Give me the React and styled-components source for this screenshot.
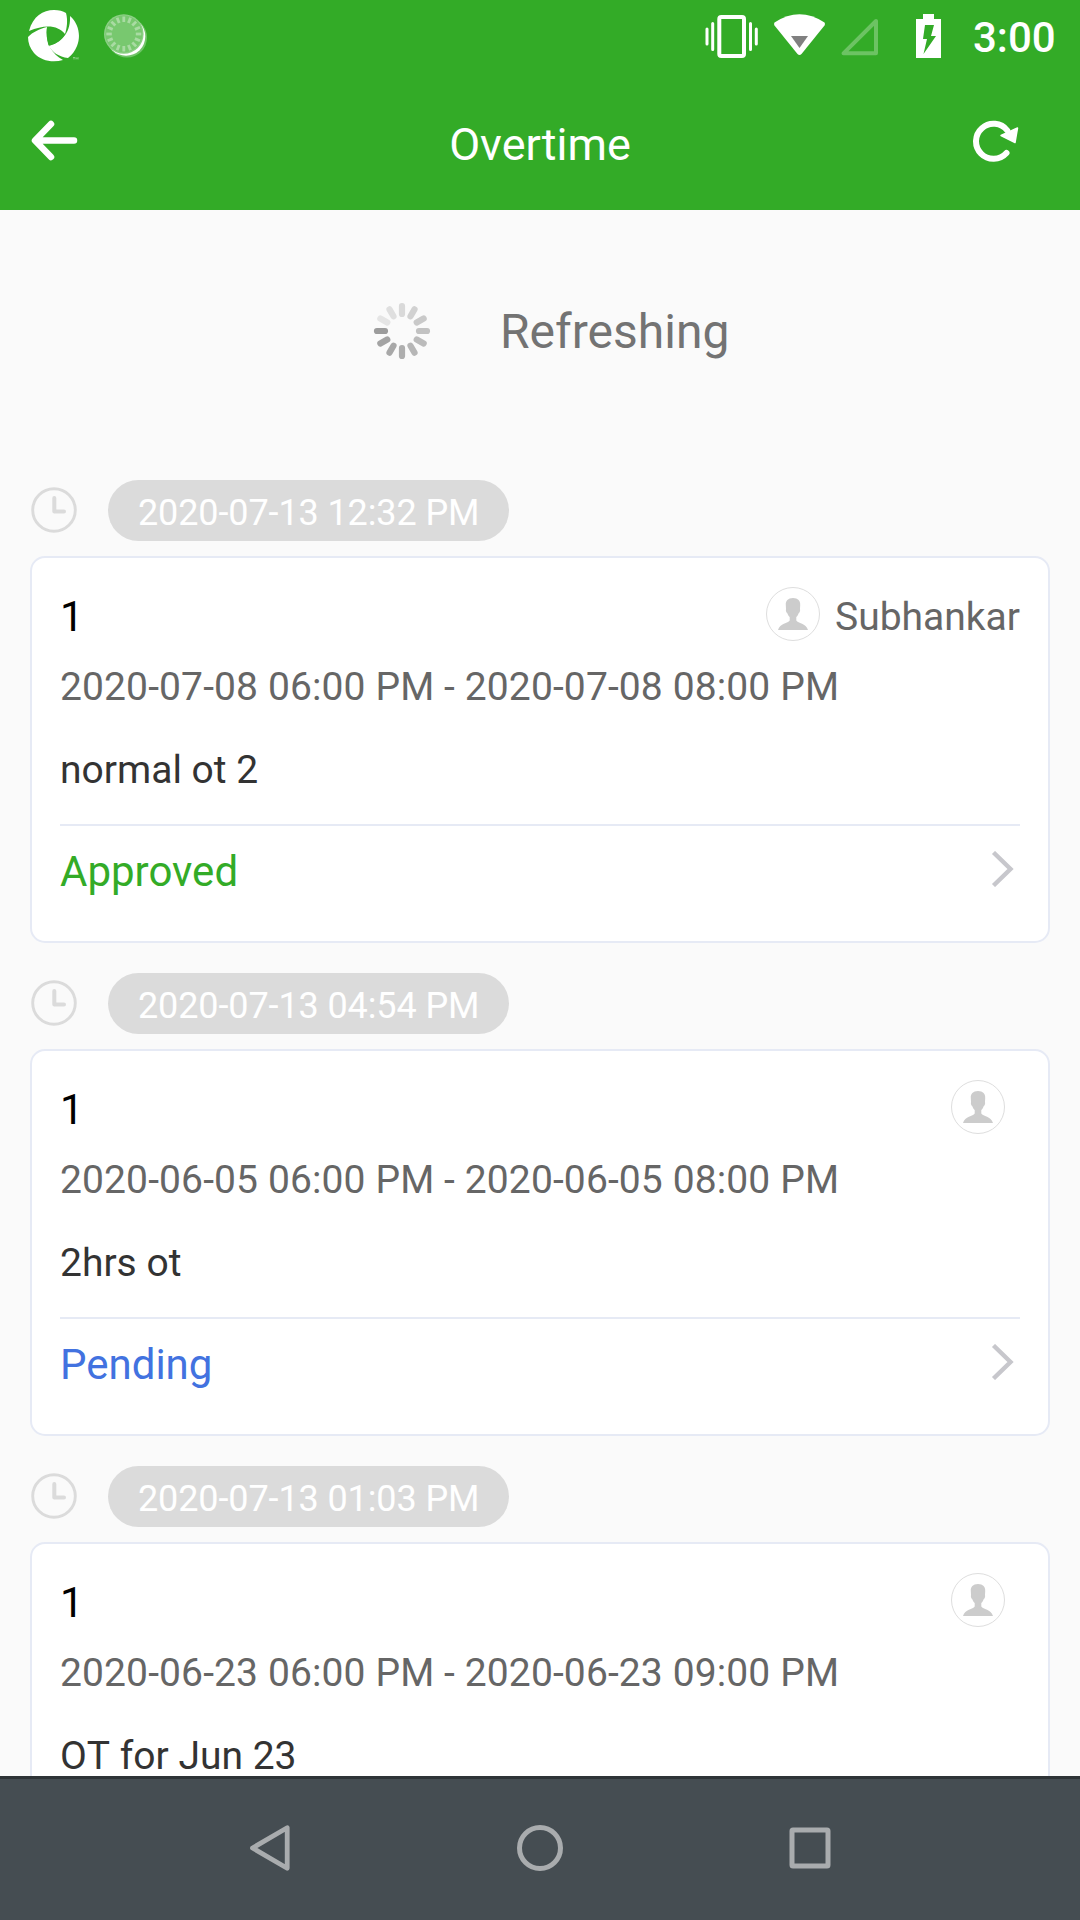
import React from "react";
import styled, { createGlobalStyle } from "styled-components";

const GlobalStyle = createGlobalStyle`
  *, *::before, *::after { box-sizing: border-box; }
  html, body { margin: 0; padding: 0; background: #fafafa; }
  body { font-family: Roboto, "Noto Sans", "Liberation Sans", sans-serif; }
  svg { display: block; flex: none; }
`;

const Screen = styled.div`
  display: flex;
  flex-direction: column;
  width: 1080px;
  height: 1920px;
  overflow: hidden;
  background: #fafafa;
`;

const Header = styled.header`
  flex: none;
  height: 210px;
  background: #33ab27;
  color: #fff;
`;

const StatusBar = styled.div`
  display: flex;
  justify-content: space-between;
  height: 72px;
  padding: 0 25px 0 28px;
`;

const StatusGroup = styled.div`
  display: flex;
  align-items: center;
  gap: ${(p) => p.$gap || 0}px;
`;

const StatusTime = styled.span`
  width: 82px;
  padding-top: 4px;
  font-size: 42px;
  font-weight: 500;
  line-height: 72px;
  white-space: nowrap;
`;

const TitleBar = styled.div`
  display: grid;
  grid-template-columns: 140px 1fr 140px;
  align-items: center;
  height: 138px;
`;

const IconButton = styled.button`
  display: flex;
  justify-content: ${(p) => p.$align};
  padding: 0 ${(p) => p.$inset}px;
  border: 0;
  background: none;
  color: inherit;
`;

const Title = styled.h1`
  margin: 0;
  padding-top: 8px;
  font-size: 45px;
  font-weight: 400;
  line-height: 54px;
  text-align: center;
`;

const Content = styled.main`
  flex: 1;
  min-height: 0;
  overflow: hidden;
`;

const Refresh = styled.div`
  display: flex;
  align-items: center;
  gap: 69px;
  height: 240px;
  padding: 2px 0 0 373px;
  color: #737373;
  font-size: 48px;
  line-height: 60px;
`;

const RefreshLabel = styled.span`
  padding-top: 2px;
`;

const Entry = styled.section`
  height: 493px;
  padding: 30px 30px 0;
`;

const Stamp = styled.div`
  display: flex;
  align-items: center;
  gap: 30px;
  height: 61px;
  margin-bottom: 15px;
`;

const ClockBox = styled.span`
  padding-bottom: 2px;
`;

const Pill = styled.span`
  height: 61px;
  padding: 3px 30px 0;
  border-radius: 31px;
  background: #dbdbdb;
  color: #fff;
  font-size: 36px;
  letter-spacing: -0.11px;
  line-height: 61px;
  white-space: nowrap;
`;

const Card = styled.article`
  height: 387px;
  padding: 28px;
  border: 2px solid #e6eaf5;
  border-radius: 15px;
  background: #fff;
`;

const CardHead = styled.div`
  display: flex;
  justify-content: space-between;
  height: 58px;
`;

const Count = styled.span`
  color: #000;
  font-size: 42px;
  line-height: 61px;
`;

const Person = styled.div`
  display: flex;
  align-items: flex-start;
  gap: 15px;
  padding-top: 1px;
  color: #666;
  font-size: 39px;
  line-height: 61px;
`;

const Avatar = styled.span`
  display: flex;
  justify-content: center;
  width: 54px;
  height: 54px;
  padding-top: 10px;
  border: 1px solid #dedede;
  border-radius: 50%;
`;

const Period = styled.div`
  height: 83px;
  color: #666;
  font-size: 39px;
  letter-spacing: 0.12px;
  line-height: 86px;
  white-space: nowrap;
`;

const Reason = styled.div`
  height: 97px;
  color: #333;
  font-size: 39px;
  font-kerning: none;
  line-height: 86px;
`;

const CardFoot = styled.div`
  display: flex;
  justify-content: space-between;
  padding-right: 6px;
  border-top: 2px solid #e6eaf5;
`;

const Status = styled.span`
  color: ${(p) => p.$color};
  font-size: 42px;
  line-height: 91px;
`;

const ChevronBox = styled.span`
  padding-top: 25px;
`;

const NavBar = styled.nav`
  display: flex;
  flex: none;
  justify-content: center;
  height: 144px;
  border-top: 3px solid #2e3437;
  background: #454d52;
`;

const NavKey = styled.span`
  display: flex;
  align-items: center;
  justify-content: center;
  width: 270px;
  height: 138px;
`;

const ApertureLogo = () => (
  <svg width="52" height="52" viewBox="0 0 52 52">
    <g fill="#fff">
      <path d="M1 21C5 6 15 0 26 0C31 0 35 1 38 3C40 10 39 18 37 24C30 15 17 14 1 21Z" />
      <path d="M42 6C51 14 53 26 49 36C47 41 44 45 40 48C31 47 24 42 21 36C33 33 43 23 42 6Z" />
      <path d="M0 27C5 22 11 19 19 17C17 30 22 43 35 50C25 53 13 51 6 43C2 38 0 33 0 27Z" />
    </g>
    <path d="M19 17.500Q29 17 36.500 25Q30 34 20.500 35.500Q18 27 19 17.500Z" fill="#33ab27" />
    <path d="M45 47.500h2m-1 0v2m2 0v-2l1 1 1-1v2" stroke="#a9dca4" strokeWidth=".7" fill="none" />
  </svg>
);

const SyncDial = () => (
  <svg width="48" height="48" viewBox="0 0 48 48">
    <circle cx="25" cy="25.500" r="20" fill="#fff" opacity=".3" />
    <circle cx="24" cy="24.500" r="19.300" fill="#fff" />
    <circle cx="21.800" cy="22" r="19.800" fill="#8dd086" />
    <circle cx="21.800" cy="22" r="18.500" fill="#78c86f" />
    {Array.from({ length: 16 }, (_, i) => (
      <path key={i} d="M21.800 4.500v5.500" stroke="#a9dba3" strokeWidth="2.800" transform={`rotate(${i * 22.5} 21.8 22)`} />
    ))}
  </svg>
);

const StatusIcons = () => (
  <svg width="268" height="72" viewBox="705 0 268 72">
    <rect x="719.300" y="17" width="24.700" height="39" rx="2" fill="none" stroke="#fff" strokeWidth="4" />
    <path d="M707 29v15M712.700 23.500v26M750.500 23.500v26M756.300 29v15" stroke="#fff" strokeWidth="3" strokeLinecap="round" />
    <path d="M774.500 22.500Q799.500 6 824.500 22.500Q825.500 24 824.500 25.500L801.500 54Q799.500 56 797.500 54L774.500 25.500Q773.500 24 774.500 22.500Z" fill="#fff" />
    <path d="M791 36h17l-8.500 12z" fill="#808080" />
    <path d="M876 21v32.300H843.500Z" fill="none" stroke="#6cc363" strokeWidth="4" strokeLinejoin="round" />
    <path d="M923 14h11v5h7v39h-25V19h7z" fill="#fff" />
    <path d="M925 25h9l-3 11h5l-12.500 18 3.500-15h-4z" fill="#33ab27" />
  </svg>
);

const BackArrow = () => (
  <svg width="48" height="42" viewBox="0 0 48 42">
    <path d="M21 4L5 20.500L21 37M7 20.500h37" fill="none" stroke="#fff" strokeWidth="6.500" strokeLinecap="round" strokeLinejoin="round" />
  </svg>
);

const ReloadIcon = () => (
  <svg width="46" height="42" viewBox="0 0 46 42">
    <path d="M34.300 10.500A17.500 17.500 0 1 0 33.500 33" fill="none" stroke="#fff" strokeWidth="6" strokeLinecap="round" />
    <path d="M44.500 8L42 22.500L28 15.500Z" fill="#fff" stroke="#fff" strokeWidth="1.500" strokeLinejoin="round" />
  </svg>
);

const spokes = ["#d9d9d9", "#d1d1d1", "#c9c9c9", "#c2c2c2", "#bbbbbb", "#b6b6b6", "#aeaeae", "#a8a8a8", "#a3a3a3", "#9c9c9c", "#e5e5e5", "#dfdfdf"];

const Spinner = () => (
  <svg width="58" height="58" viewBox="0 0 58 58">
    {spokes.map((color, i) => (
      <path key={i} d="M29 4v8" stroke={color} strokeWidth="6.200" strokeLinecap="round" transform={`rotate(${i * 30} 29 29)`} />
    ))}
  </svg>
);

const ClockIcon = () => (
  <svg width="48" height="48" viewBox="0 0 48 48">
    <circle cx="24" cy="24" r="21.300" fill="none" stroke="#dbdbdb" strokeWidth="2.900" />
    <path d="M24.300 12v13.500H34" fill="none" stroke="#dbdbdb" strokeWidth="4" strokeLinecap="round" strokeLinejoin="round" />
  </svg>
);

const Silhouette = () => (
  <svg width="30" height="32" viewBox="0 0 30 32">
    <path d="M15 0C20 0 22.500 3 22.200 7L22 11C22.500 13 21.500 15 20.500 15.500C20 17.500 19 18.500 18.300 19V22.500C20 25.500 28 25 30 32H0C2 25 10 25.500 11.700 22.500V19C11 18.500 10 17.500 9.500 15.500C8.500 15 7.500 13 8 11L7.800 7C7.500 3 10 0 15 0Z" fill="#ccc" />
  </svg>
);

const Chevron = () => (
  <svg width="23" height="36" viewBox="0 0 23 36">
    <path d="M2.500 1.500L19.500 18L2.500 34.500" fill="none" stroke="#c7c7cc" strokeWidth="4.400" />
  </svg>
);

const entries = [
  { stamp: "2020-07-13 12:32 PM", name: "Subhankar", period: "2020-07-08 06:00 PM - 2020-07-08 08:00 PM", reason: "normal ot 2", status: "Approved", color: "#33ab27" },
  { stamp: "2020-07-13 04:54 PM", name: "", period: "2020-06-05 06:00 PM - 2020-06-05 08:00 PM", reason: "2hrs ot", status: "Pending", color: "#4272e0" },
  { stamp: "2020-07-13 01:03 PM", name: "", period: "2020-06-23 06:00 PM - 2020-06-23 09:00 PM", reason: "OT for Jun 23" },
];

const OvertimeEntry = ({ entry }) => (
  <Entry>
    <Stamp>
      <ClockBox><ClockIcon /></ClockBox>
      <Pill>{entry.stamp}</Pill>
    </Stamp>
    <Card>
      <CardHead>
        <Count>1</Count>
        <Person>
          <Avatar><Silhouette /></Avatar>
          <span>{entry.name}</span>
        </Person>
      </CardHead>
      <Period>{entry.period}</Period>
      <Reason>{entry.reason}</Reason>
      {entry.status && (
        <CardFoot>
          <Status $color={entry.color}>{entry.status}</Status>
          <ChevronBox><Chevron /></ChevronBox>
        </CardFoot>
      )}
    </Card>
  </Entry>
);

export default function App() {
  return (
    <>
      <GlobalStyle />
      <Screen>
        <Header>
          <StatusBar>
            <StatusGroup $gap={22}>
              <ApertureLogo />
              <SyncDial />
            </StatusGroup>
            <StatusGroup>
              <StatusIcons />
              <StatusTime>3:00</StatusTime>
            </StatusGroup>
          </StatusBar>
          <TitleBar>
            <IconButton $align="flex-start" $inset={30} aria-label="Back"><BackArrow /></IconButton>
            <Title>Overtime</Title>
            <IconButton $align="flex-end" $inset={61} aria-label="Reload"><ReloadIcon /></IconButton>
          </TitleBar>
        </Header>
        <Content>
          <Refresh>
            <Spinner />
            <RefreshLabel>Refreshing</RefreshLabel>
          </Refresh>
          {entries.map((entry) => <OvertimeEntry key={entry.stamp} entry={entry} />)}
        </Content>
        <NavBar>
          <NavKey>
            <svg width="46" height="46" viewBox="0 0 46 46">
              <path d="M40.200 2.700V43.300L5.500 23Z" fill="none" stroke="#a9acae" strokeWidth="4.800" strokeLinejoin="round" />
            </svg>
          </NavKey>
          <NavKey>
            <svg width="46" height="46" viewBox="0 0 46 46">
              <circle cx="23" cy="23" r="20.500" fill="none" stroke="#a9acae" strokeWidth="5" />
            </svg>
          </NavKey>
          <NavKey>
            <svg width="42" height="42" viewBox="0 0 42 42">
              <rect x="3" y="3" width="36" height="36" rx="1" fill="none" stroke="#a9acae" strokeWidth="5" />
            </svg>
          </NavKey>
        </NavBar>
      </Screen>
    </>
  );
}
